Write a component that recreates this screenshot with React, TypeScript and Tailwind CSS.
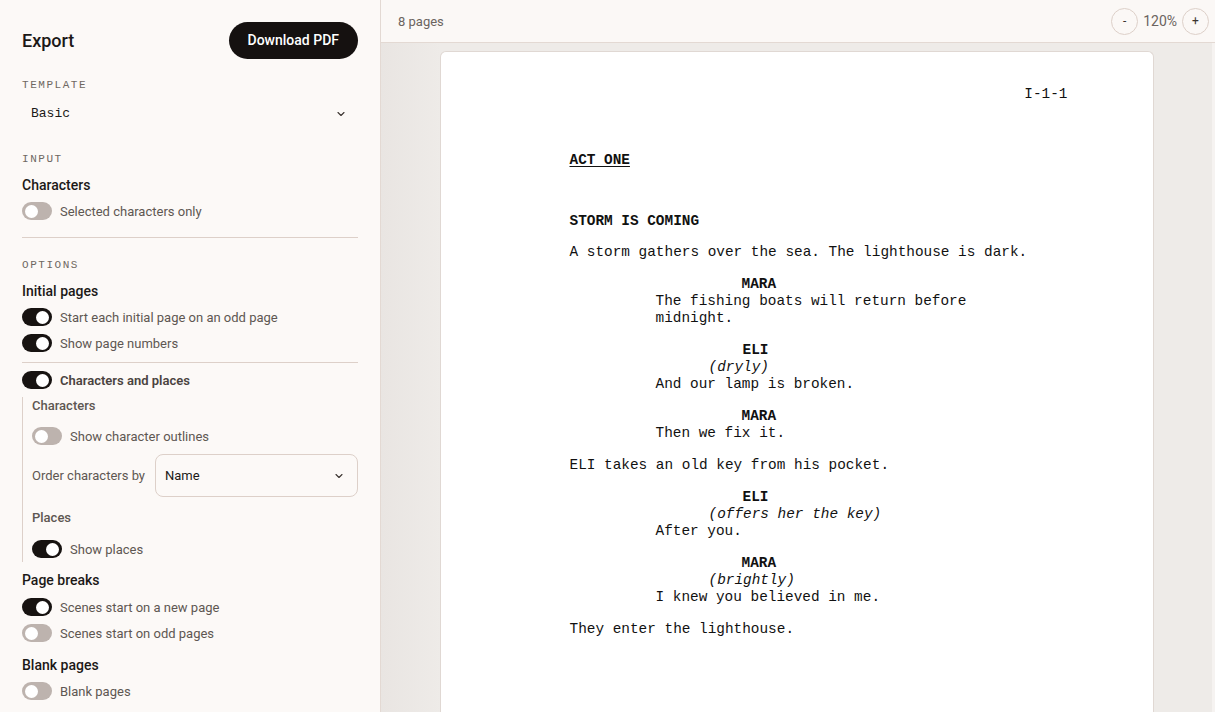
import React from "react";

const sans = { fontFamily: "Roboto, 'Noto Sans', sans-serif" };
const mono = { fontFamily: "'Liberation Mono', 'DejaVu Sans Mono', monospace" };

function Toggle({ on }: { on: boolean }) {
  return (
    <span
      className={`relative inline-flex h-[18px] w-[30px] shrink-0 items-center rounded-full ${
        on ? "bg-[#171311]" : "bg-[#bdb3ae]"
      }`}
    >
      <span
        className={`absolute top-[2.5px] h-[13px] w-[13px] rounded-full bg-white ${
          on ? "left-[14px]" : "left-[3px]"
        }`}
      />
    </span>
  );
}

function ToggleRow({ on, label, bold }: { on: boolean; label: string; bold?: boolean }) {
  return (
    <div className="flex h-[26px] items-center gap-2">
      <Toggle on={on} />
      <span className={`pt-[1px] text-[13px] leading-[18px] ${bold ? "font-semibold text-[#4a4340]" : "text-[#5e5752]"}`}>{label}</span>
    </div>
  );
}

function SectionLabel({ children, className = "" }: { children: React.ReactNode; className?: string }) {
  return (
    <div className={`h-[14px] text-[11px] leading-[14px] uppercase tracking-[0.14em] text-[#6f6862] ${className}`} style={mono}>
      {children}
    </div>
  );
}

function Heading({ children, className = "" }: { children: React.ReactNode; className?: string }) {
  return <div className={`h-[20px] text-[14px] font-medium leading-[20px] text-[#1c1917] ${className}`}>{children}</div>;
}

function Chevron() {
  return (
    <svg width="12" height="12" viewBox="0 0 24 24" fill="none" stroke="#3a3430" strokeWidth="2.2" strokeLinecap="round" strokeLinejoin="round">
      <path d="M6 9l6 6 6-6" />
    </svg>
  );
}

function Sidebar() {
  return (
    <aside className="h-full w-[381px] shrink-0 overflow-hidden border-r border-[#e3d9d3] bg-[#fcf9f7] px-[22px] pt-[22px]" style={sans}>
      <div className="flex h-[37px] items-center justify-between">
        <h1 className="text-[18px] font-medium text-[#1c1917]">Export</h1>
        <button className="h-[37px] rounded-full bg-[#151110] px-[19px] text-[14px] font-medium text-white">Download PDF</button>
      </div>

      <SectionLabel className="mt-[19px]">Template</SectionLabel>
      <div className="mt-[10px] flex h-[24px] items-center justify-between pl-[9px] pr-[11px]">
        <span className="text-[13px] text-[#1c1917]" style={mono}>Basic</span>
        <Chevron />
      </div>

      <SectionLabel className="mt-[26px]">Input</SectionLabel>
      <Heading className="mt-[9px]">Characters</Heading>
      <div className="mt-[3px]">
        <ToggleRow on={false} label="Selected characters only" />
      </div>

      <div className="mt-[13px] h-px bg-[#ddd0c9]" />

      <SectionLabel className="mt-[20px]">Options</SectionLabel>
      <Heading className="mt-[9px]">Initial pages</Heading>
      <div className="mt-[3px]">
        <ToggleRow on label="Start each initial page on an odd page" />
        <ToggleRow on label="Show page numbers" />
      </div>

      <div className="mt-[6px] h-px bg-[#ddd0c9]" />

      <div className="mt-[4px]">
        <ToggleRow on bold label="Characters and places" />
      </div>

      <div className="mt-[4px] border-l border-[#ddd0c9] pl-[9px]">
        <div className="h-[18px] text-[13px] font-medium leading-[18px] text-[#5e5752]">Characters</div>
        <div className="mt-[8px]">
          <ToggleRow on={false} label="Show character outlines" />
        </div>
        <div className="mt-[5px] flex items-center gap-[10px]">
          <span className="text-[13px] text-[#5e5752]">Order characters by</span>
          <div className="flex h-[43px] flex-1 items-center justify-between rounded-lg border border-[#ddd0c9] bg-[#fcf9f7] pl-[9px] pr-[12px]">
            <span className="text-[13px] text-[#1c1917]">Name</span>
            <Chevron />
          </div>
        </div>
        <div className="mt-[12px] h-[18px] text-[13px] font-medium leading-[18px] text-[#5e5752]">Places</div>
        <div className="mt-[9px]">
          <ToggleRow on label="Show places" />
        </div>
      </div>

      <Heading className="mt-[8px]">Page breaks</Heading>
      <div className="mt-[4px]">
        <ToggleRow on label="Scenes start on a new page" />
        <ToggleRow on={false} label="Scenes start on odd pages" />
      </div>

      <Heading className="mt-[9px]">Blank pages</Heading>
      <div className="mt-[3px]">
        <ToggleRow on={false} label="Blank pages" />
      </div>
    </aside>
  );
}

function Line({ indent = 0, children, bold, italic, underline, mt = 0 }: { indent?: number; children: React.ReactNode; bold?: boolean; italic?: boolean; underline?: boolean; mt?: number }) {
  return (
    <div
      className={`${bold ? "font-bold" : ""} ${italic ? "italic" : ""} ${underline ? "underline underline-offset-2" : ""}`}
      style={{ paddingLeft: indent, marginTop: mt }}
    >
      {children}
    </div>
  );
}

function Page() {
  const C = 172;
  const P = 139;
  const D = 86;
  return (
    <div className="mx-auto w-[714px] rounded-t-[6px] border border-b-0 border-[#e0d8d3] bg-white pl-[129px] pr-[85px] pt-[34px] text-[14.4px] leading-[17px] text-[#111]" style={mono}>
      <div className="text-right">I-1-1</div>
      <Line bold underline mt={49}>ACT ONE</Line>
      <Line bold mt={44}>STORM IS COMING</Line>
      <Line mt={14}>A storm gathers over the sea. The lighthouse is dark.</Line>
      <Line bold indent={C} mt={15}>MARA</Line>
      <Line indent={D}>The fishing boats will return before</Line>
      <Line indent={D}>midnight.</Line>
      <Line bold indent={C + 1} mt={15}>ELI</Line>
      <Line italic indent={P}>(dryly)</Line>
      <Line indent={D}>And our lamp is broken.</Line>
      <Line bold indent={C} mt={15}>MARA</Line>
      <Line indent={D}>Then we fix it.</Line>
      <Line mt={15}>ELI takes an old key from his pocket.</Line>
      <Line bold indent={C + 1} mt={15}>ELI</Line>
      <Line italic indent={P}>(offers her the key)</Line>
      <Line indent={D}>After you.</Line>
      <Line bold indent={C} mt={15}>MARA</Line>
      <Line italic indent={P}>(brightly)</Line>
      <Line indent={D}>I knew you believed in me.</Line>
      <Line mt={15}>They enter the lighthouse.</Line>
      <div className="h-[200px]" />
    </div>
  );
}

function Main() {
  return (
    <main className="flex h-full min-w-0 flex-1 flex-col" style={sans}>
      <div className="flex h-[43px] shrink-0 items-center justify-between border-b border-[#e3d9d3] bg-[#fbf8f6] pl-[17px] pr-[6px]">
        <span className="pt-[2px] text-[13px] text-[#6b645f]">8 pages</span>
        <div className="flex items-center gap-[5px]">
          <button className="flex h-[27px] w-[27px] items-center justify-center rounded-full border border-[#ddd0c9] text-[12px] text-[#3a3430]">-</button>
          <span className="text-[14px] text-[#6b645f]">120%</span>
          <button className="flex h-[27px] w-[27px] items-center justify-center rounded-full border border-[#ddd0c9] text-[12px] text-[#3a3430]">+</button>
        </div>
      </div>
      <div className="flex min-h-0 flex-1">
        <div className="min-w-0 flex-1 overflow-hidden bg-[linear-gradient(to_right,#e9e5e2,#eeebe8_60px,#eeebe8)] pt-[8px]">
          <Page />
        </div>
        <div className="w-[3px] bg-[#f6f3f1]" />
      </div>
    </main>
  );
}

export default function App() {
  return (
    <div className="flex h-[712px] w-[1215px] overflow-hidden bg-[#fcf9f7]">
      <Sidebar />
      <Main />
    </div>
  );
}
